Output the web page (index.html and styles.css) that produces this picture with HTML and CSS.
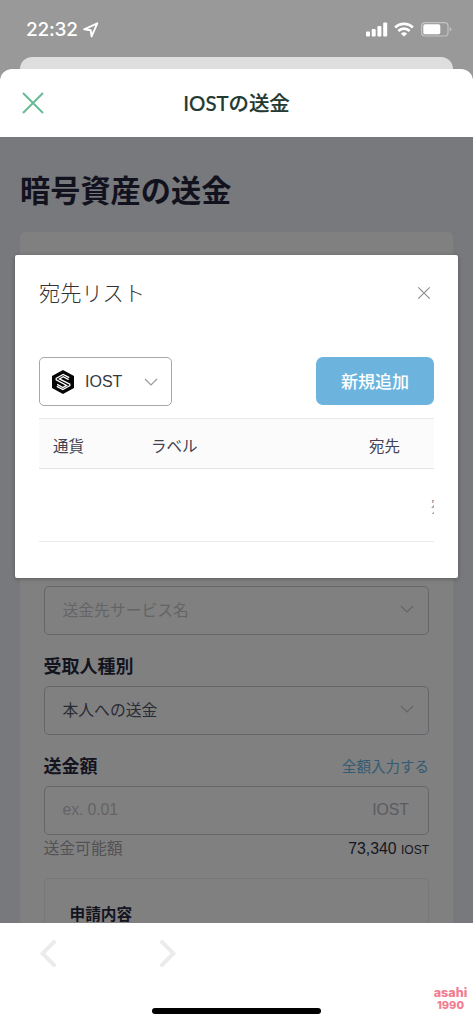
FILE: index.html
```html
<!DOCTYPE html>
<html lang="ja">
<head>
<meta charset="utf-8">
<title>IOSTの送金</title>
<link rel="stylesheet" href="styles.css">
</head>
<body>
<div class="phone">
  <div class="status">
    <div class="time"><span>22:32</span>
      <svg class="loc" viewBox="0 0 16 16"><path d="M1.2 7.3 14.3 1.3 8.6 14.4 7.7 8.2Z"/></svg>
    </div>
    <div class="indicators">
      <svg width="22" height="15" viewBox="0 0 22 15" fill="#fff"><rect x="0" y="9.5" width="4" height="5" rx="1"/><rect x="5.7" y="7" width="4" height="7.5" rx="1"/><rect x="11.4" y="4" width="4" height="10.5" rx="1"/><rect x="17.2" y=".5" width="4" height="14" rx="1"/></svg>
      <svg width="20" height="15" viewBox="0 0 20 15" fill="none" stroke="#fff" stroke-width="2.8"><path d="M1.2 5.4a12.6 12.6 0 0 1 17.6 0M4.4 9a8 8 0 0 1 11.2 0"/><path d="M10 14.6 6.9 11.7a4.5 4.5 0 0 1 6.2 0Z" fill="#fff" stroke="none"/></svg>
      <svg class="battery" width="31" height="15" viewBox="0 0 31 15"><rect x=".6" y=".6" width="26.4" height="13.4" rx="3.5" fill="none" stroke="#c3c3c3" stroke-width="1.2"/><rect x="2.3" y="2.3" width="17" height="10" rx="1.7" fill="#fff"/><path d="M28.7 5v4.6q1.7-.6 1.7-2.3T28.7 5Z" fill="#c3c3c3"/></svg>
    </div>
  </div>
  <div class="back-sheet"></div>
  <header class="sheet-head">
    <svg class="close" viewBox="0 0 22 22"><path d="M1 1 21 21M21 1 1 21"/></svg>
    <div class="sheet-title">IOSTの送金</div>
  </header>
  <main class="web">
    <h1>暗号資産の送金</h1>
    <section class="card">
      <div class="field"><span class="ph">送金先サービス名</span><svg class="chev" viewBox="0 0 14 8"><path d="M1 1 7 7 13 1"/></svg></div>
      <div class="label-row"><b>受取人種別</b></div>
      <div class="field"><span>本人への送金</span><svg class="chev" viewBox="0 0 14 8"><path d="M1 1 7 7 13 1"/></svg></div>
      <div class="label-row"><b>送金額</b><span class="link">全額入力する</span></div>
      <div class="field amount"><span class="ph">ex. 0.01</span><span class="unit">IOST</span></div>
      <div class="avail"><span>送金可能額</span><span class="value">73,340 <small>IOST</small></span></div>
      <div class="summary">申請内容</div>
    </section>
    <div class="modal">
      <div class="modal-head"><span>宛先リスト</span><svg width="14" height="14" viewBox="0 0 14 14"><path d="M1.3 1.3 12.7 12.7M12.7 1.3 1.3 12.7"/></svg></div>
      <div class="toolbar">
        <div class="select">
          <svg class="coin" viewBox="0 0 22 24"><path d="M11 0 22 6v12l-11 6L0 18V6Z" fill="#050505"/><path d="M17.2 7.6 11.2 4.4 4.2 8.3V9.8L14.6 15.4 10.8 17.6 5.2 14.4M4.8 16.4 10.8 19.6 17.8 15.7V14.2L7.4 8.9 11.2 6.7 16.6 9.6" fill="none" stroke="#fff" stroke-width="1.3"/></svg>
          <span>IOST</span>
          <svg class="chev" viewBox="0 0 14 8"><path d="M1 1 7 7 13 1"/></svg>
        </div>
        <div class="add">新規追加</div>
      </div>
      <div class="table">
        <div class="row-head"><span class="c1">通貨</span><span class="c2">ラベル</span><span>宛先</span></div>
        <div class="row-empty"><span>宛</span></div>
      </div>
    </div>
  </main>
  <footer class="nav">
    <svg class="arrow" viewBox="0 0 16 27"><path d="M14 2 2.5 13.5 14 25"/></svg>
    <svg class="arrow" viewBox="0 0 16 27"><path d="M2 2 13.5 13.5 2 25"/></svg>
    <div class="home"></div>
    <div class="mark"><div class="mark-name">asahi</div><div class="mark-year">1990</div></div>
  </footer>
</div>
</body>
</html>
```

FILE: styles.css
```css
* { box-sizing: border-box; }
body { margin: 0; font-family: "Liberation Sans", "Noto Sans CJK JP", sans-serif; }
svg { flex: none; display: block; }
.phone { position: relative; width: 473px; height: 1024px; overflow: hidden; background: #999; display: flex; flex-direction: column; }
.status { height: 69px; flex: none; display: flex; justify-content: space-between; align-items: flex-start; padding: 18px 21px 0 26px; }
.time { display: flex; align-items: center; gap: 5px; height: 24px; color: #fff; font: 500 19px/24px Inter, sans-serif; letter-spacing: -.2px; }
.loc { width: 16px; height: 16px; fill: none; stroke: #fff; stroke-width: 1.9; stroke-linejoin: round; }
.indicators { display: flex; gap: 6px; padding-top: 4px; }
.battery { margin-left: 1px; }
.back-sheet { position: absolute; left: 20px; top: 57px; width: 433px; height: 30px; border-radius: 12px; background: #dedede; }
.sheet-head { position: relative; height: 68px; flex: none; background: #fff; border-radius: 12px 12px 0 0; display: flex; align-items: center; padding-left: 22px; }
.close { width: 22px; height: 22px; fill: none; stroke: #68bb98; stroke-width: 2; }
.sheet-title { flex: 1; padding-right: 44px; text-align: center; color: #233a32; font: 500 20.4px/30px Lato, "Noto Sans CJK JP", sans-serif; -webkit-text-stroke: .2px #233a32; }
.web { position: relative; height: 786px; flex: none; overflow: hidden; background: #77797c; padding: 0 20px; }
h1 { margin: 0; padding-top: 32px; height: 95px; font-size: 30.2px; line-height: 45px; font-weight: 700; color: #12121e; }
.card { background: #808080; border-radius: 6px; box-shadow: 0 0 3px #7b7d7e; height: 760px; padding: 353.5px 24px 0 23.5px; color: #292a33; }
.field { height: 49px; border: 1.4px solid #65666c; border-radius: 5px; display: flex; align-items: center; justify-content: space-between; padding: 0 14px 2px 18px; font-size: 15.8px; }
.ph { color: #646465; }
.chev { width: 14px; height: 8px; fill: none; stroke: #646466; stroke-width: 1.2; }
.label-row { height: 51px; display: flex; justify-content: space-between; align-items: flex-start; padding-top: 19px; font-size: 18px; line-height: 27px; color: #14141f; }
.link { font-size: 14.5px; line-height: 27px; color: #345b73; }
.amount { padding-right: 19px; padding-bottom: 1px; }
.amount .ph { letter-spacing: -.1px; }
.unit { color: #5b5b60; }
.avail { height: 43px; display: flex; justify-content: space-between; font-size: 15.8px; line-height: 27px; color: #525254; }
.value { color: #161620; }
.value small { font-size: 12px; }
.summary { height: 90px; border: 1px solid #777779; border-radius: 5px; padding: 24px 25px; font-weight: 700; font-size: 15.7px; line-height: 24px; color: #14141f; }
.modal { position: absolute; left: 15px; top: 118px; width: 443px; height: 323px; background: #fff; border-radius: 2px; box-shadow: 0 1px 4px rgba(0,0,0,.28); padding: 0 24px; }
.modal-head { height: 76px; display: flex; align-items: center; justify-content: space-between; padding-right: 3px; font: 300 21.2px/30px "Noto Sans CJK JP", sans-serif; color: #333; }
.modal-head span { padding-bottom: 3px; }
.modal-head svg { fill: none; stroke: #8f8f8f; stroke-width: 1.2; }
.toolbar { height: 87px; padding-top: 26px; display: flex; justify-content: space-between; }
.select { width: 133px; height: 49px; border: 1.3px solid #a5a7aa; border-radius: 5px; display: flex; align-items: center; padding: 0 13px 0 12px; font-size: 16px; color: #383841; }
.coin { width: 22px; height: 24px; margin-right: 11px; }
.select .chev { margin-left: auto; stroke: #9999a0; }
.add { width: 118px; height: 48px; border-radius: 7px; background: #6cb4dd; color: #fff; text-align: center; font: 500 17px/47px "Noto Sans CJK JP", sans-serif; }
.table { overflow: hidden; font-size: 15.5px; color: #424250; }
.row-head { height: 51px; border-top: 1px solid #e9e9eb; border-bottom: 1px solid #e5e5e7; background: #fbfbfc; display: flex; align-items: center; padding: 2px 0 0 14px; }
.c1 { width: 98px; }
.c2 { width: 218px; }
.row-empty { height: 73px; border-bottom: 1px solid #e9e9eb; display: flex; align-items: center; padding-left: 392px; white-space: nowrap; color: #999; }
.nav { position: relative; flex: 1; background: #fff; display: flex; gap: 104px; padding: 17px 0 0 40px; }
.arrow { width: 16px; height: 27px; fill: none; stroke: #ebebeb; stroke-width: 4; stroke-linecap: round; }
.home { position: absolute; left: 152px; top: 85px; width: 169px; height: 6px; border-radius: 3px; background: #000; }
.mark { position: absolute; right: 2px; top: 62px; width: 41px; text-align: center; color: #f37c90; font-family: Inter, sans-serif; font-weight: 800; }
.mark-name { font-size: 12.6px; line-height: 15px; }
.mark-year { font-size: 11px; line-height: 11px; }
```
